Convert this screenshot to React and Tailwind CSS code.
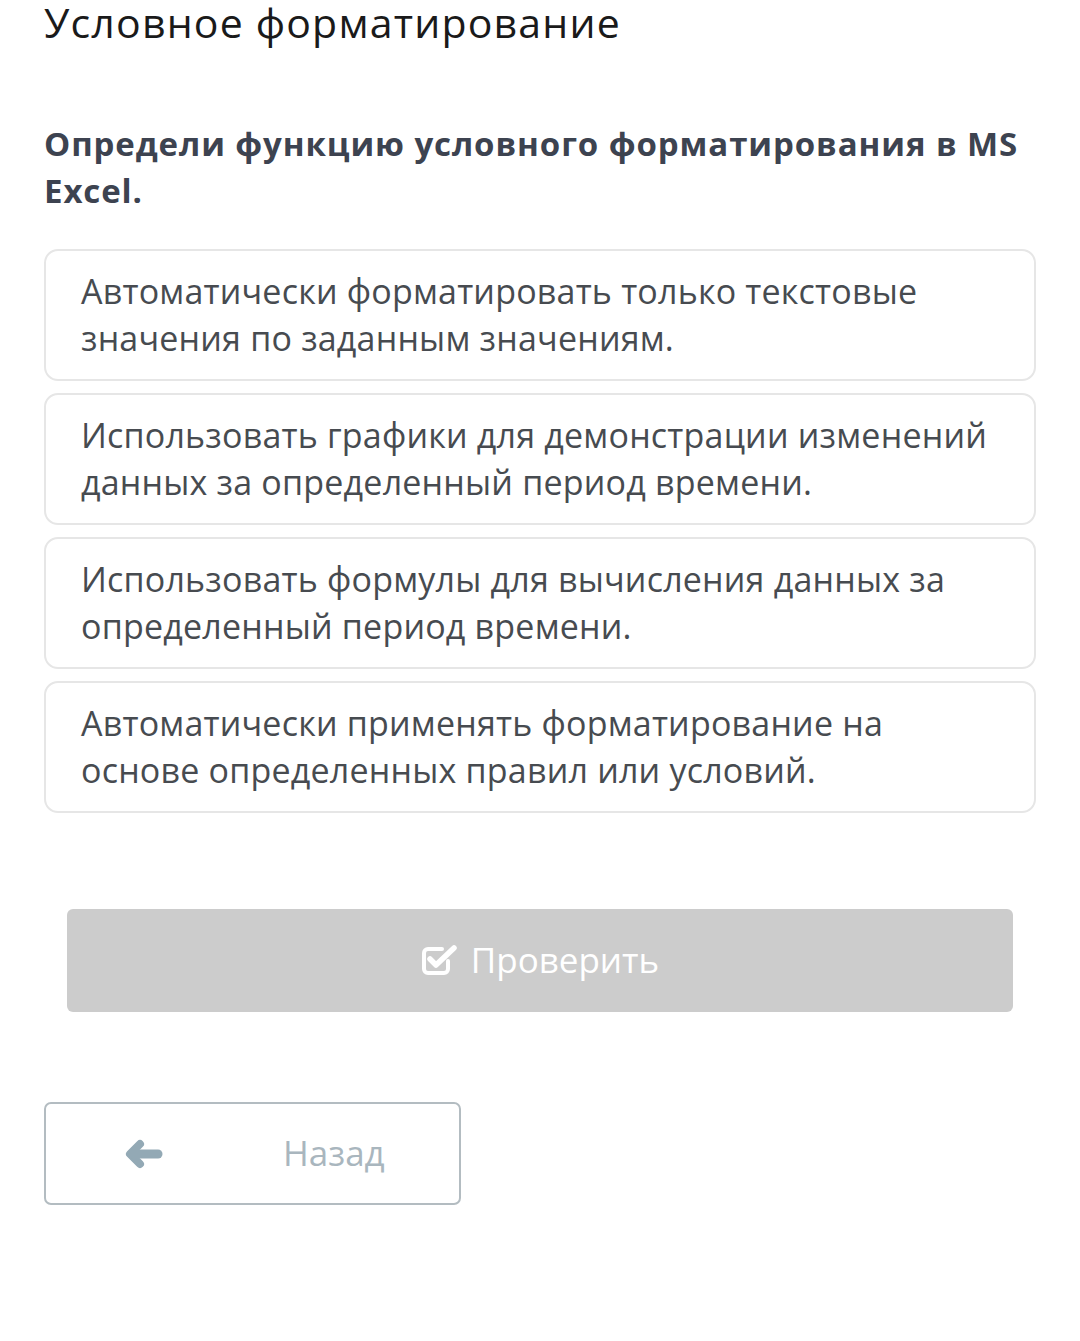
import React from "react"

const OPTIONS = [
  "Автоматически форматировать только текстовые значения по заданным значениям.",
  "Использовать графики для демонстрации изменений данных за определенный период времени.",
  "Использовать формулы для вычисления данных за определенный период времени.",
  "Автоматически применять форматирование на основе определенных правил или условий.",
]

const CheckIcon = () => (
  <svg width="38" height="34" viewBox="0 0 38 34" fill="none">
    <path
      d="M27 17v8a4 4 0 0 1-4 4H7a4 4 0 0 1-4-4V9a4 4 0 0 1 4-4h14"
      stroke="white"
      strokeWidth="4"
      strokeLinecap="round"
    />
    <path
      d="M9 15l6 6L33 4"
      stroke="white"
      strokeWidth="5.5"
      strokeLinecap="round"
      strokeLinejoin="round"
    />
  </svg>
)

// chunky left arrow, FA4 style
const BackArrow = () => (
  <svg width="38" height="30" viewBox="0 0 38 30" fill="none">
    <path
      d="M15 5L5 15l10 10"
      stroke="#93a9b5"
      strokeWidth="8"
      strokeLinecap="round"
      strokeLinejoin="round"
    />
    <path d="M8 15h25" stroke="#93a9b5" strokeWidth="9" strokeLinecap="round" />
  </svg>
)

export default function App() {
  return (
    <div
      className="w-[1080px] h-[1341px] bg-white overflow-hidden"
      style={{ fontFamily: '"Open Sans", sans-serif' }}
    >
      <div className="px-[44px]">
        <h1 className="text-[41px] leading-[44px] text-[#1a1a1a] tracking-[1.2px]">
          Условное форматирование
        </h1>

        <h2 className="mt-[76px] text-[33px] leading-[47px] font-bold text-[#3d4350] tracking-[0.9px]">
          Определи функцию условного форматирования в MS Excel.
        </h2>

        <div className="mt-[35px] flex flex-col gap-[12px]">
          {OPTIONS.map(opt => (
            <div
              key={opt}
              className="h-[132px] border-2 border-[#e6e6e6] rounded-[14px] pl-[35px] pr-[40px] pt-[17px] text-[34px] leading-[47px] text-[#474b50] tracking-[0.2px]"
            >
              {opt}
            </div>
          ))}
        </div>

        <div className="px-[23px] mt-[96px]">
          <button className="w-full h-[103px] bg-[#cccccc] rounded-[6px] flex items-center justify-center gap-[12px] text-white text-[35px]">
            <CheckIcon />
            <span>Проверить</span>
          </button>
        </div>

        <button className="mt-[90px] w-[417px] h-[103px] border-2 border-[#b3bcc1] rounded-[7px] flex items-center pl-[79px] text-[35px] text-[#a9b6be]">
          <BackArrow />
          <span className="ml-[120px]">Назад</span>
        </button>
      </div>
    </div>
  )
}
